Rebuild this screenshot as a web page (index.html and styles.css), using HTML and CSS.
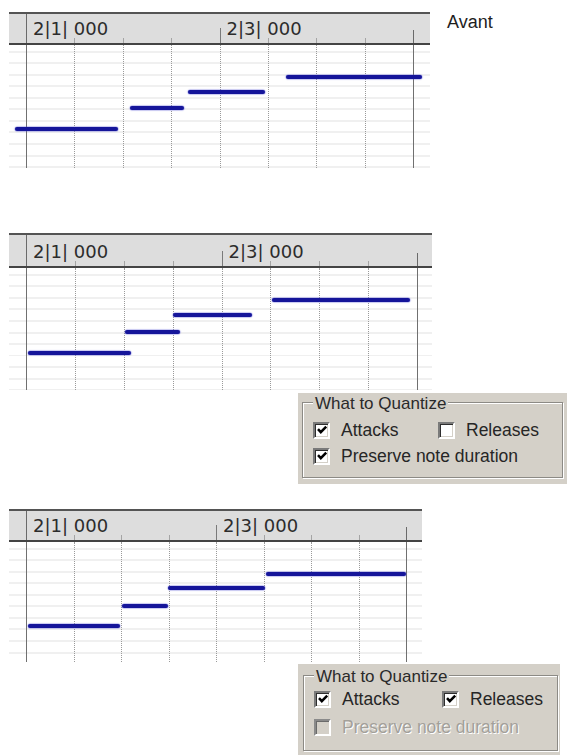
FILE: index.html
```html
<!DOCTYPE html>
<html lang="fr">
<head>
<meta charset="utf-8">
<title>Quantize</title>
<link rel="stylesheet" href="styles.css">
</head>
<body>
<main class="page">

  <section class="stage s1">
    <div class="roll r1">
      <div class="hdr">
        <div class="cols">
          <div class="col first"><span class="lbl">2|1| 000</span></div>
          <div class="col"></div><div class="col"></div><div class="col"></div>
          <div class="col major"><span class="lbl">2|3| 000</span></div>
          <div class="col"></div><div class="col"></div><div class="col"></div>
          <div class="col end"></div>
        </div>
      </div>
      <div class="grid">
        <div class="cols">
          <div class="col first"></div>
          <div class="col"></div><div class="col"></div><div class="col"></div>
          <div class="col"></div>
          <div class="col"></div><div class="col"></div><div class="col"></div>
          <div class="col end"></div>
        </div>
        <div class="note" style="left:6px;top:82px;width:103px"></div>
        <div class="note" style="left:121px;top:61px;width:54px"></div>
        <div class="note" style="left:179px;top:45px;width:77px"></div>
        <div class="note" style="left:277px;top:30px;width:136px"></div>
      </div>
    </div>
    <p class="caption">Avant</p>
  </section>

  <section class="stage s2">
    <div class="roll r2">
      <div class="hdr">
        <div class="cols">
          <div class="col first"><span class="lbl">2|1| 000</span></div>
          <div class="col"></div><div class="col"></div><div class="col"></div>
          <div class="col major"><span class="lbl">2|3| 000</span></div>
          <div class="col"></div><div class="col"></div><div class="col"></div>
          <div class="col end"></div>
        </div>
      </div>
      <div class="grid">
        <div class="cols">
          <div class="col first"></div>
          <div class="col"></div><div class="col"></div><div class="col"></div>
          <div class="col"></div>
          <div class="col"></div><div class="col"></div><div class="col"></div>
          <div class="col end"></div>
        </div>
        <div class="note" style="left:19px;top:83px;width:103px"></div>
        <div class="note" style="left:116px;top:62px;width:55px"></div>
        <div class="note" style="left:164px;top:45px;width:79px"></div>
        <div class="note" style="left:263px;top:30px;width:138px"></div>
      </div>
    </div>

    <div class="dlg d1">
      <fieldset class="grp">
        <legend class="legend">What to Quantize</legend>
        <div class="opts">
          <label class="opt"><span class="cb"><svg viewBox="0 0 12 12"><path d="M2 5.2 L4.8 8.2 L10.2 2.6"/></svg></span>Attacks</label>
          <label class="opt"><span class="cb"></span>Releases</label>
          <label class="opt wide"><span class="cb"><svg viewBox="0 0 12 12"><path d="M2 5.2 L4.8 8.2 L10.2 2.6"/></svg></span>Preserve note duration</label>
        </div>
      </fieldset>
    </div>
  </section>

  <section class="stage s3">
    <div class="roll r3">
      <div class="hdr">
        <div class="cols">
          <div class="col first"><span class="lbl">2|1| 000</span></div>
          <div class="col"></div><div class="col"></div><div class="col"></div>
          <div class="col major"><span class="lbl">2|3| 000</span></div>
          <div class="col"></div><div class="col"></div><div class="col"></div>
          <div class="col end"></div>
        </div>
      </div>
      <div class="grid">
        <div class="cols">
          <div class="col first"></div>
          <div class="col"></div><div class="col"></div><div class="col"></div>
          <div class="col"></div>
          <div class="col"></div><div class="col"></div><div class="col"></div>
          <div class="col end"></div>
        </div>
        <div class="note" style="left:19px;top:82px;width:92px"></div>
        <div class="note" style="left:113px;top:62px;width:46px"></div>
        <div class="note" style="left:159px;top:44px;width:97px"></div>
        <div class="note" style="left:257px;top:30px;width:140px"></div>
      </div>
    </div>

    <div class="dlg d2">
      <fieldset class="grp">
        <legend class="legend">What to Quantize</legend>
        <div class="opts">
          <label class="opt"><span class="cb"><svg viewBox="0 0 12 12"><path d="M2 5.2 L4.8 8.2 L10.2 2.6"/></svg></span>Attacks</label>
          <label class="opt"><span class="cb"><svg viewBox="0 0 12 12"><path d="M2 5.2 L4.8 8.2 L10.2 2.6"/></svg></span>Releases</label>
          <label class="opt wide off"><span class="cb"></span>Preserve note duration</label>
        </div>
      </fieldset>
    </div>
  </section>

</main>
</body>
</html>
```

FILE: styles.css
```css
html, body {
  margin: 0;
  padding: 0;
  background: #ffffff;
}

.page {
  width: 567px;
  height: 756px;
  overflow: hidden;
  font-family: "Liberation Sans", Arial, sans-serif;
}

.stage {
  display: flex;
  flex-direction: column;
}

.s1 {
  flex-direction: row;
  align-items: flex-start;
  padding-top: 12px;
}

.s2 { margin-top: 65px; }
.s3 { margin-top: 25px; }

/* ---------- piano roll ---------- */
.roll {
  margin-left: 9px;
  flex: none;
}

.r1 { width: 421px; --beat: 48.375px; --hdr-h: 29px; --grid-h: 123px; }
.r2 { width: 423px; --beat: 48.875px; --hdr-h: 31px; --grid-h: 122px; }
.r3 { width: 413px; --beat: 47.5px;  --hdr-h: 29px; --grid-h: 120px; }

.hdr {
  height: var(--hdr-h);
  background: #dddddd;
  border-top: 2px solid #545454;
  border-bottom: 2px solid #444444;
}

.cols {
  display: flex;
  height: 100%;
  padding-left: 17px;
}

.col {
  flex: none;
  width: var(--beat);
  height: 100%;
  box-sizing: border-box;
  position: relative;
}

.col.end { width: 0; }

/* header ticks */
.hdr .col::before {
  content: "";
  position: absolute;
  left: 0;
  bottom: 0;
  width: 1px;
  height: 5px;
  background: #a4a4a4;
}

.hdr .col.first::before { height: 100%; background: #6a6a6a; }
.hdr .col.major::before { height: 15px; background: #7a7a7a; }
.hdr .col.end::before   { height: 13px; background: #6a6a6a; }

.lbl {
  display: block;
  padding-left: 7px;
  font-family: "DejaVu Sans", Verdana, sans-serif;
  font-size: 18px;
  line-height: var(--hdr-h);
  color: #2c2c2c;
  white-space: nowrap;
}

.r2 .lbl { padding-top: 1px; line-height: 31px; }

.grid {
  position: relative;
  height: var(--grid-h);
  background:
    repeating-linear-gradient(to bottom,
      transparent 0 6px,
      #f0f0f0 6px 8px,
      transparent 8px 11.5px);
}

.grid .col {
  border-left: 1px dotted #9a9a9a;
}

.grid .col.first { border-left: 1px solid #707070; }
.grid .col.end   { border-left: 1px solid #707070; }

.note {
  position: absolute;
  height: 4px;
  border-radius: 2px;
  background: #15159a;
  box-shadow: 0 0 1px 0.5px rgba(70, 70, 210, 0.55);
}

.caption {
  margin: 1px 0 0 17px;
  font-size: 18px;
  line-height: 18px;
  color: #1e1e1e;
}

/* ---------- dialog ---------- */
.dlg {
  background: #d4d0c8;
  margin-left: 298px;
  box-sizing: border-box;
}

.d1 {
  width: 269px;
  margin-top: 3px;
  padding: 0 4px 6px 4px;
}

.d2 {
  width: 262px;
  height: 91px;
  margin-top: 2px;
  padding: 2px 2px 0 5px;
}

.grp {
  margin: 0;
  min-width: 0;
  border: 1px solid #8c8a85;
  box-shadow: inset 1px 1px 0 #ffffff, 1px 1px 0 #ffffff;
  padding: 9px 10px 12px 10px;
}

.d2 .grp { padding: 5px 10px 14px 10px; }

.legend {
  padding: 3px 2px 0 2px;
  background: #d4d0c8;
  font-size: 17px;
  line-height: 16px;
  color: #2a2a2a;
}

.opts {
  display: grid;
  grid-template-columns: 125px 1fr;
  row-gap: 8px;
}

.d2 .opts {
  grid-template-columns: 128px 1fr;
  row-gap: 10px;
}

.opt {
  display: flex;
  align-items: center;
  gap: 11px;
  height: 18px;
  font-size: 17.5px;
  line-height: 18px;
  color: #262626;
  white-space: nowrap;
}

.opt.wide { grid-column: 1 / -1; }

.cb {
  flex: none;
  width: 17px;
  height: 17px;
  box-sizing: border-box;
  background: #ffffff;
  border: 2px solid;
  border-color: #7a7a7a #ffffff #ffffff #7a7a7a;
  box-shadow: inset 1px 1px 0 #2e2e2e, inset -1px -1px 0 #d4d0c8;
  display: flex;
  align-items: center;
  justify-content: center;
}

.cb svg {
  width: 12px;
  height: 12px;
}

.cb path {
  fill: none;
  stroke: #000000;
  stroke-width: 2.5;
}

.opt.off {
  color: #a3a09a;
  text-shadow: 1px 1px 0 #ffffff;
}

.opt.off .cb {
  background: #d4d0c8;
  border-color: #8a8a8a #ffffff #ffffff #8a8a8a;
  box-shadow: inset 1px 1px 0 #6a6a6a, inset -1px -1px 0 #d4d0c8;
}
```
